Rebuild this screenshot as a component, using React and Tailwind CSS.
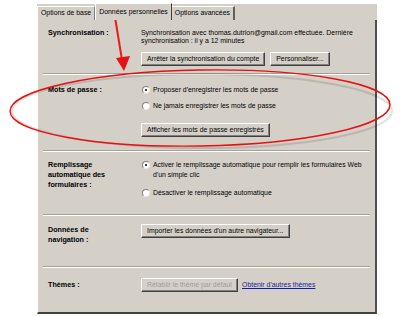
import React from "react";

const font = { fontFamily: '"Liberation Sans", Arial, sans-serif' };

function Btn({ children, disabled, className = "" }) {
  return (
    <div
      className={
        "h-[14px] px-[5px] flex items-center bg-[#d4d0c8] border border-t-white border-l-white border-r-[#404040] border-b-[#404040] shadow-[inset_-1px_-1px_0_#808080] text-[6.9px] leading-none whitespace-nowrap " +
        (disabled ? "text-[#a09c94] " : "text-black ") +
        className
      }
    >
      {children}
    </div>
  );
}

function Radio({ checked }) {
  return (
    <div className="w-[8px] h-[8px] rounded-full bg-white border border-t-[#808080] border-l-[#808080] border-r-[#e8e6e0] border-b-[#e8e6e0] flex items-center justify-center shrink-0">
      {checked && <div className="w-[2px] h-[2px] rounded-full bg-black" />}
    </div>
  );
}

function Sep() {
  return <div className="mx-[5px] h-[2px] border-t border-t-[#a6a299] border-b border-b-white" />;
}

export default function App() {
  return (
    <div className="relative w-[400px] h-[316px] bg-white overflow-hidden" style={font}>
      <div className="ml-[37px] pt-[4px] w-[340px]">
        {/* tab strip */}
        <div className="flex items-end h-[16px] bg-[#d4d0c8]">
          <div className="h-[14px] px-[3px] flex items-center border-t border-l border-t-white border-l-white border-r border-r-[#808080] text-[6.9px] leading-none text-black whitespace-nowrap">
            Options de base
          </div>
          <div className="h-[17px] -mt-[3px] px-[3px] flex items-center border-t border-l border-t-white border-l-white border-r border-r-[#404040] bg-[#d4d0c8] text-[6.9px] leading-none text-black whitespace-nowrap relative z-10">
            Données personnelles
          </div>
          <div className="h-[14px] px-[3px] flex items-center border-t border-t-white border-r-2 border-r-[#606060] text-[6.9px] leading-none text-black whitespace-nowrap">
            Options avancées
          </div>
          <div className="flex-1 h-full" />
        </div>
        {/* panel */}
        <div className="bg-[#d4d0c8] border-l border-l-white border-r-2 border-r-[#505050] border-b-2 border-b-[#404040] text-[6.9px] leading-[8px] text-black h-[294px]">
          {/* Synchronisation */}
          <div className="grid grid-cols-[103px_1fr] h-[53px] pt-[9px]">
            <div className="pl-[10px] font-bold text-[7.2px]">Synchronisation :</div>
            <div>
              <div>Synchronisation avec thomas.dutrion@gmail.com effectuée. Dernière</div>
              <div>synchronisation : il y a 12 minutes</div>
              <div className="flex gap-[5px] mt-[7px]">
                <Btn>Arrêter la synchronisation du compte</Btn>
                <Btn>Personnaliser...</Btn>
              </div>
            </div>
          </div>
          <Sep />
          {/* Mots de passe */}
          <div className="grid grid-cols-[103px_1fr] h-[75px] pt-[11px]">
            <div className="pl-[10px] font-bold text-[7.2px]">Mots de passe :</div>
            <div>
              <div className="flex items-center gap-[3px] pl-[1px]">
                <Radio checked />
                <span>Proposer d'enregistrer les mots de passe</span>
              </div>
              <div className="flex items-center gap-[3px] pl-[1px] mt-[8px]">
                <Radio />
                <span>Ne jamais enregistrer les mots de passe</span>
              </div>
              <div className="flex mt-[13px]">
                <Btn>Afficher les mots de passe enregistrés</Btn>
              </div>
            </div>
          </div>
          <Sep />
          {/* Remplissage */}
          <div className="grid grid-cols-[103px_1fr] h-[62px] pt-[9px]">
            <div className="pl-[10px] font-bold text-[7.2px] leading-[10px] -mt-[1px]">
              Remplissage<br />automatique des<br />formulaires :
            </div>
            <div>
              <div className="flex items-start gap-[3px] pl-[1px]">
                <Radio checked />
                <span className="leading-[10px] -mt-[1px]">
                  Activer le remplissage automatique pour remplir les formulaires Web<br />d'un simple clic
                </span>
              </div>
              <div className="flex items-center gap-[3px] pl-[1px] mt-[9px]">
                <Radio />
                <span>Désactiver le remplissage automatique</span>
              </div>
            </div>
          </div>
          <Sep />
          {/* Données de navigation */}
          <div className="grid grid-cols-[103px_1fr] h-[50px] pt-[8px]">
            <div className="pl-[10px] font-bold text-[7.2px] leading-[10px] pt-[1px]">
              Données de<br />navigation :
            </div>
            <div className="flex items-start">
              <Btn>Importer les données d'un autre navigateur...</Btn>
            </div>
          </div>
          <Sep />
          {/* Thèmes */}
          <div className="grid grid-cols-[103px_1fr] pt-[10px]">
            <div className="pl-[10px] font-bold text-[7.2px] pt-[3px]">Thèmes :</div>
            <div className="flex items-center gap-[4px]">
              <Btn disabled>Rétablir le thème par défaut</Btn>
              <span className="text-[#1a1aa6] underline">Obtenir d'autres thèmes</span>
            </div>
          </div>
        </div>
      </div>
      {/* annotations overlay */}
      <svg className="absolute inset-0 pointer-events-none" width="400" height="316" viewBox="0 0 400 316">
        <ellipse cx="202" cy="111" rx="190" ry="37" fill="none" stroke="rgba(0,0,0,0.12)" strokeWidth="2" />
        <ellipse cx="200" cy="108" rx="190" ry="38" fill="none" stroke="#e81010" strokeWidth="1.4" transform="rotate(-1 200 108)" />
        <line x1="115" y1="17" x2="122" y2="60" stroke="#ee1a1a" strokeWidth="2" />
        <polygon points="116,58 130,56 124,71" fill="#e81010" />
      </svg>
    </div>
  );
}
